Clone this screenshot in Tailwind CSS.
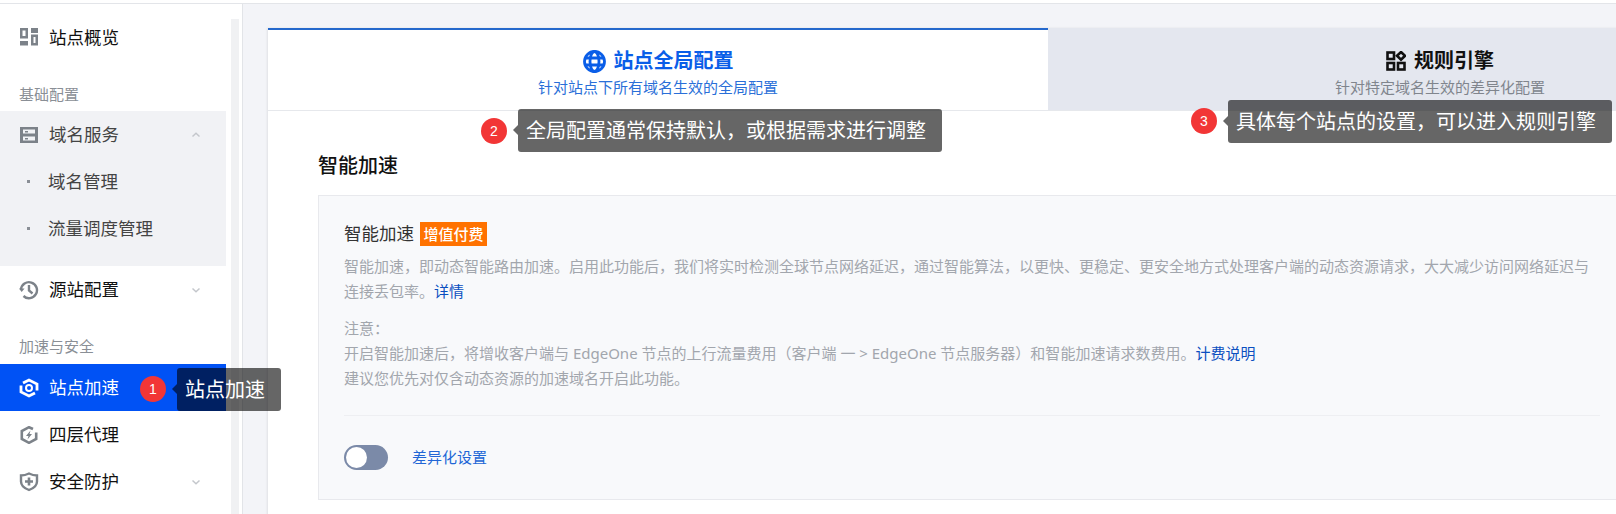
<!DOCTYPE html>
<html lang="zh-CN">
<head>
  <meta charset="UTF-8">
  <title>站点加速</title>
  <script src="https://cdn.jsdelivr.net/npm/@tailwindcss/browser@4"></script>
</head>
<body class="relative h-[514px] w-[1616px] overflow-hidden bg-white font-['Noto_Sans','Noto_Sans_CJK_SC',sans-serif] text-[15px]">
  <div class="h-[4px] border-b border-[#e3e5e9]"></div>
  <div class="flex h-[510px]">
    <!-- sidebar -->
    <aside class="flex w-[243px] shrink-0 border-r border-[#e2e4e8] bg-white">
      <nav class="w-[226px] shrink-0 pt-[9px] text-[17.5px] text-[#111]">
        <a class="flex h-[47px] items-center pl-[20px]">
          <svg class="mr-[11px] size-[18px] text-[#7c8289]" viewBox="0 0 18 18" fill="currentColor" fill-rule="evenodd"><path d="M0 0h8v10.5H0zM2.5 2.5V8h3V2.500z"/><path d="M0 13h8v4.500H0z"/><path d="M11 0h7v5h-7z"/><path d="M11 6.500h7v11h-7zM13.500 9v6h2V9z"/></svg>
          <span class="pt-[1px]">站点概览</span>
        </a>
        <div class="flex h-[51px] items-end pb-[7px] pl-[19px] text-[15px] leading-[20px] text-[#8a8f96]">基础配置</div>
        <div class="h-[155px] bg-[#f1f2f5] text-[#444]">
          <a class="flex h-[47px] items-center pl-[20px]">
            <svg class="mr-[11px] size-[18px] text-[#7c8289]" viewBox="0 0 18 18" fill="currentColor" fill-rule="evenodd"><path d="M0 1h18v16H0zM3 3.500v4h12v-4zM3 10.500v4h12v-4z"/><path d="M5 5h3v1.500H5zM5 12h3v1.500H5z"/></svg>
            域名服务
            <svg class="ml-[72px] size-[10px] text-[#c4c7cc]" viewBox="0 0 10 10" fill="none" stroke="currentColor" stroke-width="1.5"><path d="M1.500 6.500 5 3.200l3.500 3.300"/></svg>
          </a>
          <a class="flex h-[47px] items-center pl-[27px]"><span class="mr-[18px] size-[3px] bg-[#8a8f96]"></span>域名管理</a>
          <a class="flex h-[47px] items-center pl-[27px]"><span class="mr-[18px] size-[3px] bg-[#8a8f96]"></span>流量调度管理</a>
        </div>
        <a class="flex h-[47px] items-center pl-[19px]">
          <svg class="mr-[10px] size-[20px] text-[#7c8289]" viewBox="0 0 20 20" fill="none" stroke="currentColor" stroke-width="2.4"><path d="M2 9.500A8 8 0 1 1 4.500 16"/><path d="M0 8.500h5.500L2.700 12z" fill="currentColor" stroke="none"/><path d="M10 5v5.500l3.500 3"/></svg>
          源站配置
          <svg class="ml-[72px] size-[10px] text-[#c4c7cc]" viewBox="0 0 10 10" fill="none" stroke="currentColor" stroke-width="1.5"><path d="M1.500 3.500 5 6.800l3.500-3.300"/></svg>
        </a>
        <div class="flex h-[51px] items-end pb-[8px] pl-[19px] text-[15px] leading-[20px] text-[#8a8f96]">加速与安全</div>
        <a class="flex h-[47px] items-center bg-[#0052f5] pl-[19px] text-white">
          <svg class="mr-[10px] size-[20px]" viewBox="0 0 20 20" fill="none" stroke="currentColor" stroke-width="2.800"><path d="M4 5 10 2l8 4v6.500"/><path d="M16 15l-6 3-8-4V7.500"/><circle cx="10" cy="10" r="3" stroke-width="2"/></svg>
          站点加速
        </a>
        <a class="flex h-[47px] items-center pl-[20px]">
          <svg class="mr-[11px] size-[18px] text-[#7c8289]" viewBox="0 0 18 18" fill="none" stroke="currentColor" stroke-width="2.600"><path d="M13 3 9 1.200 1.800 5v8L9 16.800l7.200-3.800V6.500"/><path d="M10.500 4.500 6 10h2.500l-1 3.500L12 8H9.500z" fill="currentColor" stroke="none"/></svg>
          四层代理
        </a>
        <a class="flex h-[47px] items-center pl-[19px]">
          <svg class="mr-[10px] size-[20px] text-[#7c8289]" viewBox="0 0 20 20" fill="none" stroke="currentColor" stroke-width="2.400"><path d="M2 3.500Q6 3.500 10 1.500 14 3.500 18 3.500V9.500C18 14 14 16.500 10 18 6 16.500 2 14 2 9.500z"/><path d="M6 9.500h8M10 5.500v8" stroke-width="2.600"/></svg>
          安全防护
          <svg class="ml-[72px] size-[10px] text-[#c4c7cc]" viewBox="0 0 10 10" fill="none" stroke="currentColor" stroke-width="1.5"><path d="M1.500 3.500 5 6.800l3.500-3.300"/></svg>
        </a>
      </nav>
      <div class="ml-[5px] mt-[15px] w-[8px] bg-[#f0f1f3]"></div>
    </aside>

    <!-- main -->
    <main class="min-w-0 flex-1 bg-[#f3f4f8] pl-[25px] pt-[24px]">
      <div class="h-[500px] w-[1564px] bg-white shadow-[-1px_0_2px_rgba(0,0,0,0.08)]">
        <div class="flex h-[83px] border-b border-[#e6e8ec]">
          <div class="flex w-[780px] flex-col items-center border-t-[2px] border-[#2468cc] pt-[15px]">
            <div class="flex h-[32px] items-center text-[20px] font-bold text-[#0a5ee8]">
              <svg class="mr-[8px] size-[23px]" viewBox="0 0 23 23" fill="none" stroke="currentColor" stroke-width="2.800"><circle cx="11.500" cy="11.500" r="10"/><ellipse cx="11.500" cy="11.500" rx="4.500" ry="10"/><path d="M2 8h19M2 15h19"/></svg>
              站点全局配置
            </div>
            <p class="-mt-[1px] text-[15px] leading-[22px] text-[#2a6fd8]">针对站点下所有域名生效的全局配置</p>
          </div>
          <div class="flex w-[784px] flex-col items-center bg-[#e4e7ef] pt-[17px]">
            <div class="flex h-[32px] items-center text-[20px] font-bold text-[#111]">
              <svg class="mr-[8px] size-[20px]" viewBox="0 0 20 20" fill="none" stroke="currentColor" stroke-width="2.600"><rect x="1.500" y="1.500" width="6.500" height="6.500"/><rect x="1.500" y="12" width="6.500" height="6.500"/><rect x="12" y="12" width="6.500" height="6.500"/><path d="M15 1 19 4.800 15 8.600 11 4.800z"/></svg>
              规则引擎
            </div>
            <p class="-mt-[1px] text-[15px] leading-[22px] text-[#80858d]">针对特定域名生效的差异化配置</p>
          </div>
        </div>
        <div class="pl-[50px]">
          <h2 class="flex h-[84px] items-center pt-[25px] text-[20px] font-medium text-[#111]">智能加速</h2>
          <section class="h-[305px] w-[1340px] border border-[#e8e9ed] bg-[#f8f9fb] pl-[25px] pr-[57px] pt-[25px]">
            <div class="flex h-[25px] items-center text-[17.5px] text-[#333]">
              智能加速
              <span class="ml-[6px] bg-[#ff7200] px-[3.5px] text-[15px] font-medium leading-[24px] text-white">增值付费</span>
            </div>
            <p class="mt-[8px] text-[15px] leading-[25px] text-[#a2a6ad]">智能加速，即动态智能路由加速。启用此功能后，我们将实时检测全球节点网络延迟，通过智能算法，以更快、更稳定、更安全地方式处理客户端的动态资源请求，大大减少访问网络延迟与连接丢包率。<a class="text-[#0a4fc0]">详情</a></p>
            <p class="mt-[12px] text-[15px] leading-[25px] text-[#a2a6ad]">注意：<br>开启智能加速后，将增收客户端与 EdgeOne 节点的上行流量费用（客户端 一 &gt; EdgeOne 节点服务器）和智能加速请求数费用。<a class="text-[#0a4fc0]">计费说明</a><br>建议您优先对仅含动态资源的加速域名开启此功能。</p>
            <div class="mt-[24px] border-t border-[#eeeff2] pt-[29px]">
              <div class="flex items-center">
                <span class="flex h-[25px] w-[44px] items-center rounded-full bg-[#7b8aa8] pl-[2px]"><span class="size-[21px] rounded-full bg-white"></span></span>
                <a class="ml-[24px] text-[15px] text-[#2166d6]">差异化设置</a>
              </div>
            </div>
          </section>
        </div>
      </div>
    </main>
  </div>

  <!-- annotation badges and tooltips -->
  <span class="absolute left-[140px] top-[376px] flex size-[26px] items-center justify-center rounded-full bg-[#f23636] font-['Liberation_Sans'] text-[14px] text-white">1</span>
  <div class="absolute left-[177px] top-[368px] flex h-[43px] items-center rounded-[3px] bg-black/60 pl-[8px] pr-[16px] text-[20px] text-white before:absolute before:-left-[5px] before:top-[16px] before:border-y-[5px] before:border-r-[5px] before:border-y-transparent before:border-r-black/60">站点加速</div>

  <span class="absolute left-[481px] top-[118px] flex size-[26px] items-center justify-center rounded-full bg-[#f23636] font-['Liberation_Sans'] text-[14px] text-white">2</span>
  <div class="absolute left-[518px] top-[109px] flex h-[43px] items-center rounded-[3px] bg-black/60 pl-[8px] pr-[16px] text-[20px] text-white before:absolute before:-left-[5px] before:top-[16px] before:border-y-[5px] before:border-r-[5px] before:border-y-transparent before:border-r-black/60">全局配置通常保持默认，或根据需求进行调整</div>

  <span class="absolute left-[1191px] top-[108px] flex size-[26px] items-center justify-center rounded-full bg-[#f23636] font-['Liberation_Sans'] text-[14px] text-white">3</span>
  <div class="absolute left-[1228px] top-[100px] flex h-[43px] items-center rounded-[3px] bg-black/60 pl-[8px] pr-[16px] text-[20px] text-white before:absolute before:-left-[5px] before:top-[16px] before:border-y-[5px] before:border-r-[5px] before:border-y-transparent before:border-r-black/60">具体每个站点的设置，可以进入规则引擎</div>
</body>
</html>
